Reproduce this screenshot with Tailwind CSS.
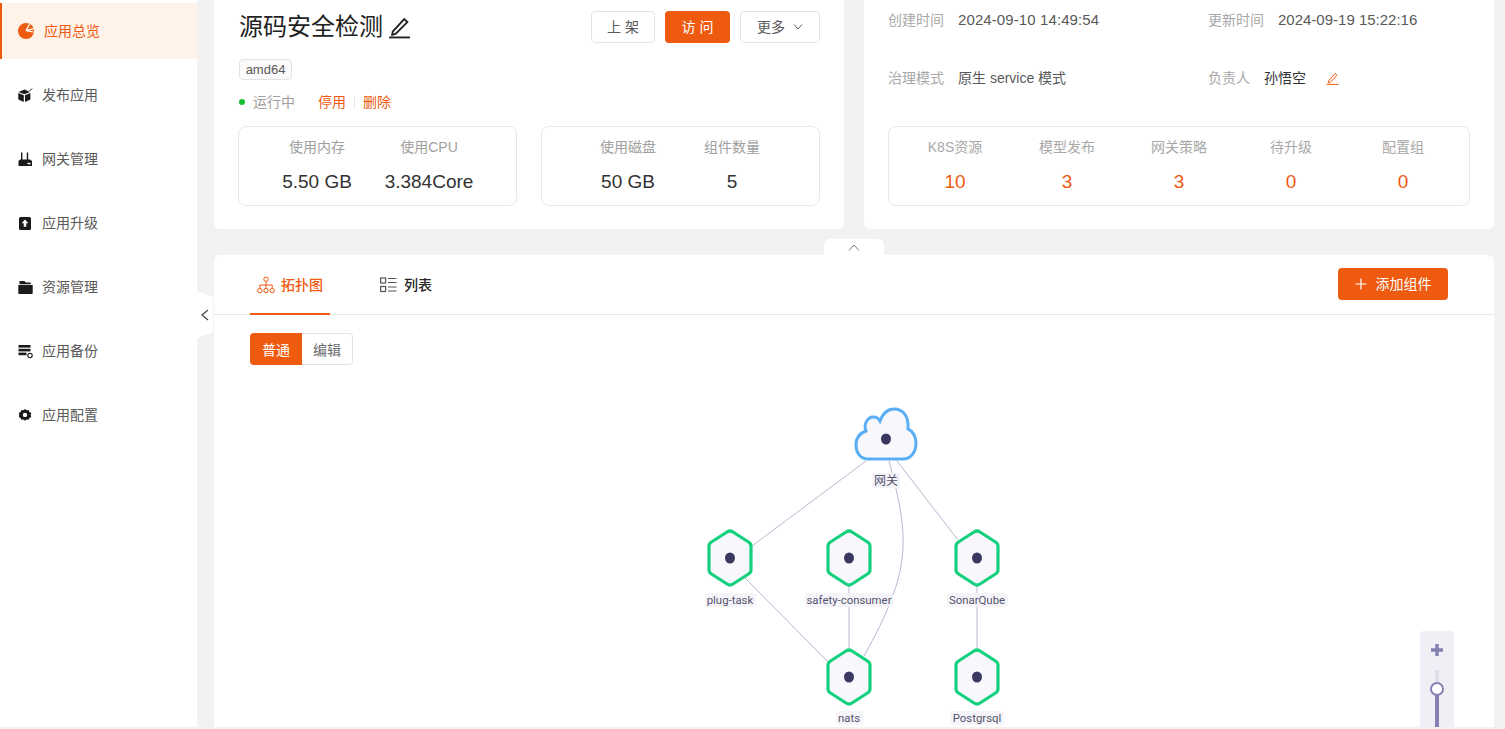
<!DOCTYPE html>
<html lang="en">
<head>
    <meta charset="UTF-8">
    <meta name="viewport" content="width=device-width, initial-scale=1.0">
    <title>源码安全检测</title>
    <script src="https://cdn.jsdelivr.net/npm/@tailwindcss/browser@4"></script>
</head>
<body class="bg-[#f2f2f2] [font-family:'Liberation_Sans','Noto_Sans_CJK_SC',sans-serif] text-sm overflow-hidden">
<div class="relative flex h-[729px] w-[1505px] overflow-hidden pb-[2px]">

    <!-- sidebar -->
    <aside class="w-[197px] shrink-0 bg-white pt-[3px] flex flex-col gap-2 text-[#595959] leading-[20px]">
        <a class="h-14 flex items-center bg-[#fff2e8] border-l-2 border-[#ee5a10] pl-4 gap-[10px] text-[#ee5a10]">
            <svg class="w-4 h-4" viewBox="0 0 16 16"><circle cx="8" cy="8" r="8" fill="#ee5a10"/><path d="M8 7.6 L11.5 1.2 M8 7.6 L15.8 5.6 M8 7.6 L15.6 9" stroke="#fff" stroke-width="1.2" fill="none"/></svg>
            <span>应用总览</span>
        </a>
        <a class="h-14 flex items-center pl-[18px] gap-[9px]">
            <svg class="w-[15px] h-[15px]" viewBox="0 0 15 15" fill="#1a1a1a"><path d="M0.5 4 L6.5 1.6 L12 4 L6.3 6.2Z"/><path d="M0.3 5 L5.8 7.2 V14 L0.3 11.6Z"/><path d="M12.4 5 L7 7.2 V14 L12.4 11.6Z"/><path d="M11.5 3 L14 0.5" stroke="#1a1a1a" stroke-width="1"/></svg>
            <span>发布应用</span>
        </a>
        <a class="h-14 flex items-center pl-[18px] gap-[9px]">
            <svg class="w-[15px] h-[15px]" viewBox="0 0 15 15" fill="#1a1a1a"><path d="M3 0.5h1.4v8H3z M8.8 0.5h1.4v8H8.8z"/><path d="M0.5 9 L2 7.6 H12 L14 9 V14 H0.5Z"/><rect x="9.5" y="10.8" width="3" height="1.5" fill="#fff"/></svg>
            <span>网关管理</span>
        </a>
        <a class="h-14 flex items-center pl-[18px] gap-[9px]">
            <svg class="w-[15px] h-[15px]" viewBox="0 0 15 15"><rect x="1" y="1" width="12" height="13" rx="1.5" fill="#1a1a1a"/><path d="M7 3.5 L10.3 7.2 H8.3 V10.8 H5.7 V7.2 H3.7Z" fill="#fff"/></svg>
            <span>应用升级</span>
        </a>
        <a class="h-14 flex items-center pl-[18px] gap-[9px]">
            <svg class="w-[15px] h-[15px]" viewBox="0 0 15 15" fill="#1a1a1a"><path d="M1.5 1 H6.5 L7.8 2.6 H12.8 V4.2 H1.5Z"/><path d="M0.3 5 H14.7 V13 A1 1 0 0 1 13.7 14 H1.3 A1 1 0 0 1 0.3 13Z"/></svg>
            <span>资源管理</span>
        </a>
        <a class="h-14 flex items-center pl-[18px] gap-[9px]">
            <svg class="w-[15px] h-[15px]" viewBox="0 0 15 15" fill="#1a1a1a"><rect x="0.5" y="1" width="12" height="2.6"/><rect x="0.5" y="4.8" width="12" height="2.6"/><rect x="0.5" y="8.6" width="8" height="2.6"/><circle cx="12" cy="11.5" r="2.2" fill="none" stroke="#1a1a1a" stroke-width="1.1"/></svg>
            <span>应用备份</span>
        </a>
        <a class="h-14 flex items-center pl-[18px] gap-[9px]">
            <svg class="w-[15px] h-[15px]" viewBox="0 0 15 15"><path d="M7 1 L8.6 2.2 L10.6 2 L11.4 3.9 L13.2 4.9 L12.7 6.9 L13.2 8.9 L11.4 9.9 L10.6 11.8 L8.6 11.6 L7 12.8 L5.4 11.6 L3.4 11.8 L2.6 9.9 L0.8 8.9 L1.3 6.9 L0.8 4.9 L2.6 3.9 L3.4 2 L5.4 2.2Z" fill="#1a1a1a"/><circle cx="7" cy="6.9" r="2.2" fill="#fff"/></svg>
            <span>应用配置</span>
        </a>
    </aside>

    <!-- sidebar collapse handle -->
    <div class="absolute left-[197px] top-[291px] w-4 h-[47px] bg-white flex items-center justify-center [clip-path:polygon(0_0,100%_12%,100%_88%,0_100%)]">
        <svg class="w-2 h-3" viewBox="0 0 8 12" fill="none" stroke="#444" stroke-width="1.2"><path d="M7 1 L1 6 L7 11"/></svg>
    </div>

    <main class="flex-1 pl-[17px] pr-[11px] flex flex-col">
        <div class="flex gap-5 h-[229px] shrink-0">

            <!-- app card -->
            <section class="w-[630px] bg-white rounded-b-md px-6 leading-[20px]">
                <div class="flex items-center h-[54px]">
                    <h1 class="text-2xl leading-[32px] text-[#222] ml-[1px]">源码安全检测</h1>
                    <svg class="w-[23px] h-[23px] ml-[5px]" viewBox="0 0 22 22" fill="none" stroke="#222" stroke-width="1.8"><path d="M4.5 15 L15.5 3 L18.5 5.8 L7.5 17 L4 18Z"/><path d="M1 20.5 H21"/></svg>
                    <div class="ml-auto flex gap-[10px] items-center text-[#595959]">
                        <button class="w-16 h-8 border border-[#e3e3e3] rounded">上 架</button>
                        <button class="w-[65px] h-8 bg-[#ee5a10] text-white rounded">访 问</button>
                        <button class="w-20 h-8 border border-[#e3e3e3] rounded flex items-center justify-center gap-2">更多
                            <svg class="w-[10px] h-[6px]" viewBox="0 0 10 6" fill="none" stroke="#595959" stroke-width="1"><path d="M1 0.5 L5 5 L9 0.5"/></svg>
                        </button>
                    </div>
                </div>
                <div class="mt-[5px] flex">
                    <span class="ml-[1px] h-[21px] w-[53px] border border-[#e3e3e3] bg-[#fafafa] rounded text-[13px] text-[#595959] flex items-center justify-center">amd64</span>
                </div>
                <div class="flex items-center mt-[12px] h-[20px]">
                    <span class="ml-[1px] w-[6px] h-[6px] rounded-full bg-[#14c02e]"></span>
                    <span class="ml-2 text-[#a0a0a0]">运行中</span>
                    <span class="ml-[23px] text-[#ee5a10]">停用</span>
                    <span class="mx-2 w-px h-3 bg-[#e5e5e5]"></span>
                    <span class="text-[#ee5a10]">删除</span>
                </div>
                <div class="flex justify-between mt-[14px]">
                    <div class="w-[279px] h-20 border border-[#e8e8e8] rounded-lg flex pl-[22px]">
                        <div class="w-28 text-center">
                            <p class="mt-[10px] text-[#a0a0a0]">使用内存</p>
                            <p class="mt-[15px] text-[19px] leading-[20px] text-[#333]">5.50 GB</p>
                        </div>
                        <div class="w-28 text-center">
                            <p class="mt-[10px] text-[#a0a0a0]">使用CPU</p>
                            <p class="mt-[15px] text-[19px] leading-[20px] text-[#333]">3.384Core</p>
                        </div>
                    </div>
                    <div class="w-[279px] h-20 border border-[#e8e8e8] rounded-lg flex pl-[34px]">
                        <div class="w-[104px] text-center">
                            <p class="mt-[10px] text-[#a0a0a0]">使用磁盘</p>
                            <p class="mt-[15px] text-[19px] leading-[20px] text-[#333]">50 GB</p>
                        </div>
                        <div class="w-[104px] text-center">
                            <p class="mt-[10px] text-[#a0a0a0]">组件数量</p>
                            <p class="mt-[15px] text-[19px] leading-[20px] text-[#333]">5</p>
                        </div>
                    </div>
                </div>
            </section>

            <!-- meta card -->
            <section class="w-[630px] bg-white rounded-b-md px-6 leading-[20px]">
                <div class="flex h-[39px] items-center pt-[1px]">
                    <span class="w-[70px] text-[#a8a8a8]">创建时间</span>
                    <span class="w-[250px] text-[#595959] text-[15px] tracking-[0.1px]">2024-09-10 14:49:54</span>
                    <span class="w-[70px] text-[#a8a8a8]">更新时间</span>
                    <span class="text-[#595959] text-[15px]">2024-09-19 15:22:16</span>
                </div>
                <div class="flex h-[20px] items-center mt-[29px]">
                    <span class="w-[70px] text-[#a8a8a8]">治理模式</span>
                    <span class="w-[250px] text-[#595959]">原生 service 模式</span>
                    <span class="w-[56px] text-[#a8a8a8]">负责人</span>
                    <span class="text-[#333]">孙悟空</span>
                    <svg class="w-[13px] h-[13px] ml-5" viewBox="0 0 13 13" fill="none" stroke="#ee5a10" stroke-width="1"><path d="M2.5 9 L9 1.5 L11 3.2 L4.6 10.2 L2.2 10.8Z"/><path d="M0.5 12.4 H12.5"/></svg>
                </div>
                <div class="mt-[38px] w-[582px] h-20 border border-[#e8e8e8] rounded-lg flex px-[10px]">
                    <div class="w-28 text-center">
                        <p class="mt-[10px] text-[#a8a8a8]">K8S资源</p>
                        <p class="mt-[15px] text-[19px] leading-[20px] text-[#ee5a10]">10</p>
                    </div>
                    <div class="w-28 text-center">
                        <p class="mt-[10px] text-[#a8a8a8]">模型发布</p>
                        <p class="mt-[15px] text-[19px] leading-[20px] text-[#ee5a10]">3</p>
                    </div>
                    <div class="w-28 text-center">
                        <p class="mt-[10px] text-[#a8a8a8]">网关策略</p>
                        <p class="mt-[15px] text-[19px] leading-[20px] text-[#ee5a10]">3</p>
                    </div>
                    <div class="w-28 text-center">
                        <p class="mt-[10px] text-[#a8a8a8]">待升级</p>
                        <p class="mt-[15px] text-[19px] leading-[20px] text-[#ee5a10]">0</p>
                    </div>
                    <div class="w-28 text-center">
                        <p class="mt-[10px] text-[#a8a8a8]">配置组</p>
                        <p class="mt-[15px] text-[19px] leading-[20px] text-[#ee5a10]">0</p>
                    </div>
                </div>
            </section>
        </div>

        <!-- collapse tab for the top cards -->
        <div class="absolute left-[824px] top-[239px] w-[60px] h-4 bg-white rounded-t-md flex items-center justify-center">
            <svg class="w-3 h-[7px]" viewBox="0 0 12 7" fill="none" stroke="#777" stroke-width="1"><path d="M1 6.5 L6 1 L11 6.5"/></svg>
        </div>

        <!-- topology card -->
        <section class="relative mt-[26px] flex-1 bg-white rounded-t-md overflow-hidden">
            <div class="h-[60px] border-b border-[#e8e8e8] flex items-end pl-9 pr-[46px]">
                <div class="w-20 h-[59px] border-b-[2px] border-[#ee5a10] flex items-center justify-center gap-[6px] text-[#ee5a10] font-medium -mb-px">
                    <svg class="w-[18px] h-[18px]" viewBox="0 0 18 18" fill="none" stroke="#ee5a10" stroke-width="1"><circle cx="9" cy="3.2" r="2.2"/><circle cx="2.8" cy="14.6" r="2.2"/><circle cx="9" cy="14.6" r="2.2"/><circle cx="15.2" cy="14.6" r="2.2"/><path d="M9 5.4 V12.4 M2.8 12.4 V9 H15.2 V12.4"/></svg>
                    <span>拓扑图</span>
                </div>
                <div class="ml-[50px] h-[59px] flex items-center gap-[7px] text-[#262626] font-medium">
                    <svg class="w-[17px] h-[16px]" viewBox="0 0 17 16" fill="none" stroke="#555" stroke-width="1.2"><rect x="0.6" y="1" width="5" height="5"/><rect x="0.6" y="9.5" width="5" height="5"/><path d="M8 1.5 H16.5 M8 5.5 H16.5 M8 10 H16.5 M8 14 H16.5"/></svg>
                    <span>列表</span>
                </div>
                <button class="ml-auto mb-[14px] w-[110px] h-8 bg-[#ee5a10] text-white rounded flex items-center justify-center gap-[9px]">
                    <svg class="w-3 h-3" viewBox="0 0 12 12" stroke="#fff" stroke-width="1.2"><path d="M6 0.5 V11.5 M0.5 6 H11.5"/></svg>
                    <span>添加组件</span>
                </button>
            </div>
            <div class="flex ml-9 mt-[18px] h-8 w-[103px] text-center leading-[34px]">
                <span class="w-[52px] bg-[#ee5a10] text-white rounded-l">普通</span>
                <span class="w-[51px] border border-l-0 border-[#e3e3e3] text-[#6b6b6b] rounded-r leading-[32px]">编辑</span>
            </div>

            <!-- diagram canvas: offsets are page x-214, y-255 -->
            <svg class="absolute left-0 top-0 w-[1280px] h-[472px]" viewBox="214 255 1280 472">
                <defs>
                    <path id="hex" d="M-3 -26 Q0 -28 3 -26 L18.5 -16 Q21 -14.5 21 -12 V12 Q21 14.5 18.5 16 L3 26 Q0 28 -3 26 L-18.5 16 Q-21 14.5 -21 12 V-12 Q-21 -14.5 -18.5 -16 Z"/>
                </defs>
                <g stroke="#bab8d2" stroke-width="1" fill="none">
                    <path d="M866 461 L752 546"/>
                    <path d="M897 461 L958 540"/>
                    <path d="M889 461 C910 540 912 570 864 656"/>
                    <path d="M745 578 L828 662"/>
                    <path d="M849 585 V648"/>
                    <path d="M977 585 V648"/>
                </g>
                <path d="M868 459 C860 459 856 452 856 445 C856 438 860 433 866 431 C863 424 868 417 873 417 C877 417 879 419 880 421 C883 413 888 409 894 409 C903 409 909 416 908 429 C913 431 916 437 916 443 C916 452 911 459 903 459Z" fill="#f8f8fc" stroke="#5aaef5" stroke-width="3"/>
                <ellipse cx="886" cy="439" rx="5" ry="5.5" fill="#3a3760"/>
                <rect x="872" y="473" width="28" height="15" rx="2" fill="#f3f3f8"/>
                <text x="886" y="485" text-anchor="middle" font-size="12" fill="#55536f">网关</text>

                <g fill="#f8f8fc" stroke="#14d07f" stroke-width="3.2">
                    <use href="#hex" x="730" y="558"/>
                    <use href="#hex" x="849" y="558"/>
                    <use href="#hex" x="977" y="558"/>
                    <use href="#hex" x="849" y="677"/>
                    <use href="#hex" x="977" y="677"/>
                </g>
                <g fill="#3a3760">
                    <ellipse cx="730" cy="558" rx="5" ry="5.5"/>
                    <ellipse cx="849" cy="558" rx="5" ry="5.5"/>
                    <ellipse cx="977" cy="558" rx="5" ry="5.5"/>
                    <ellipse cx="849" cy="677" rx="5" ry="5.5"/>
                    <ellipse cx="977" cy="677" rx="5" ry="5.5"/>
                </g>
                <g fill="#f3f3f8" fill-opacity="0.85">
                    <rect x="705" y="593" width="51" height="14" rx="2"/>
                    <rect x="805" y="593" width="88" height="14" rx="2"/>
                    <rect x="947" y="593" width="61" height="14" rx="2"/>
                    <rect x="836" y="711" width="27" height="14" rx="2"/>
                    <rect x="950" y="711" width="54" height="14" rx="2"/>
                </g>
                <g font-size="11.4" fill="#55536f" text-anchor="middle" class="[font-family:Roboto,sans-serif]">
                    <text x="730" y="604">plug-task</text>
                    <text x="849" y="604">safety-consumer</text>
                    <text x="977" y="604">SonarQube</text>
                    <text x="849" y="722">nats</text>
                    <text x="977" y="722">Postgrsql</text>
                </g>
            </svg>

            <!-- zoom control -->
            <div class="absolute left-[1206px] top-[376px] w-[34px] h-24 bg-[#efeff5] rounded-t flex flex-col items-center">
                <svg class="w-[14px] h-[14px] mt-3" viewBox="0 0 14 14" stroke="#8582b3" stroke-width="3.5"><path d="M7 1 V13 M1 7 H13"/></svg>
                <div class="relative mt-[13px] w-1 flex-1 bg-[#dfdfea]">
                    <div class="absolute left-0 right-0 top-5 bottom-0 bg-[#8582b3]"></div>
                    <div class="absolute left-[-5px] top-[12px] w-[14px] h-[14px] rounded-full bg-white border-2 border-[#8582b3]"></div>
                </div>
            </div>
        </section>
    </main>
</div>
</body>
</html>
